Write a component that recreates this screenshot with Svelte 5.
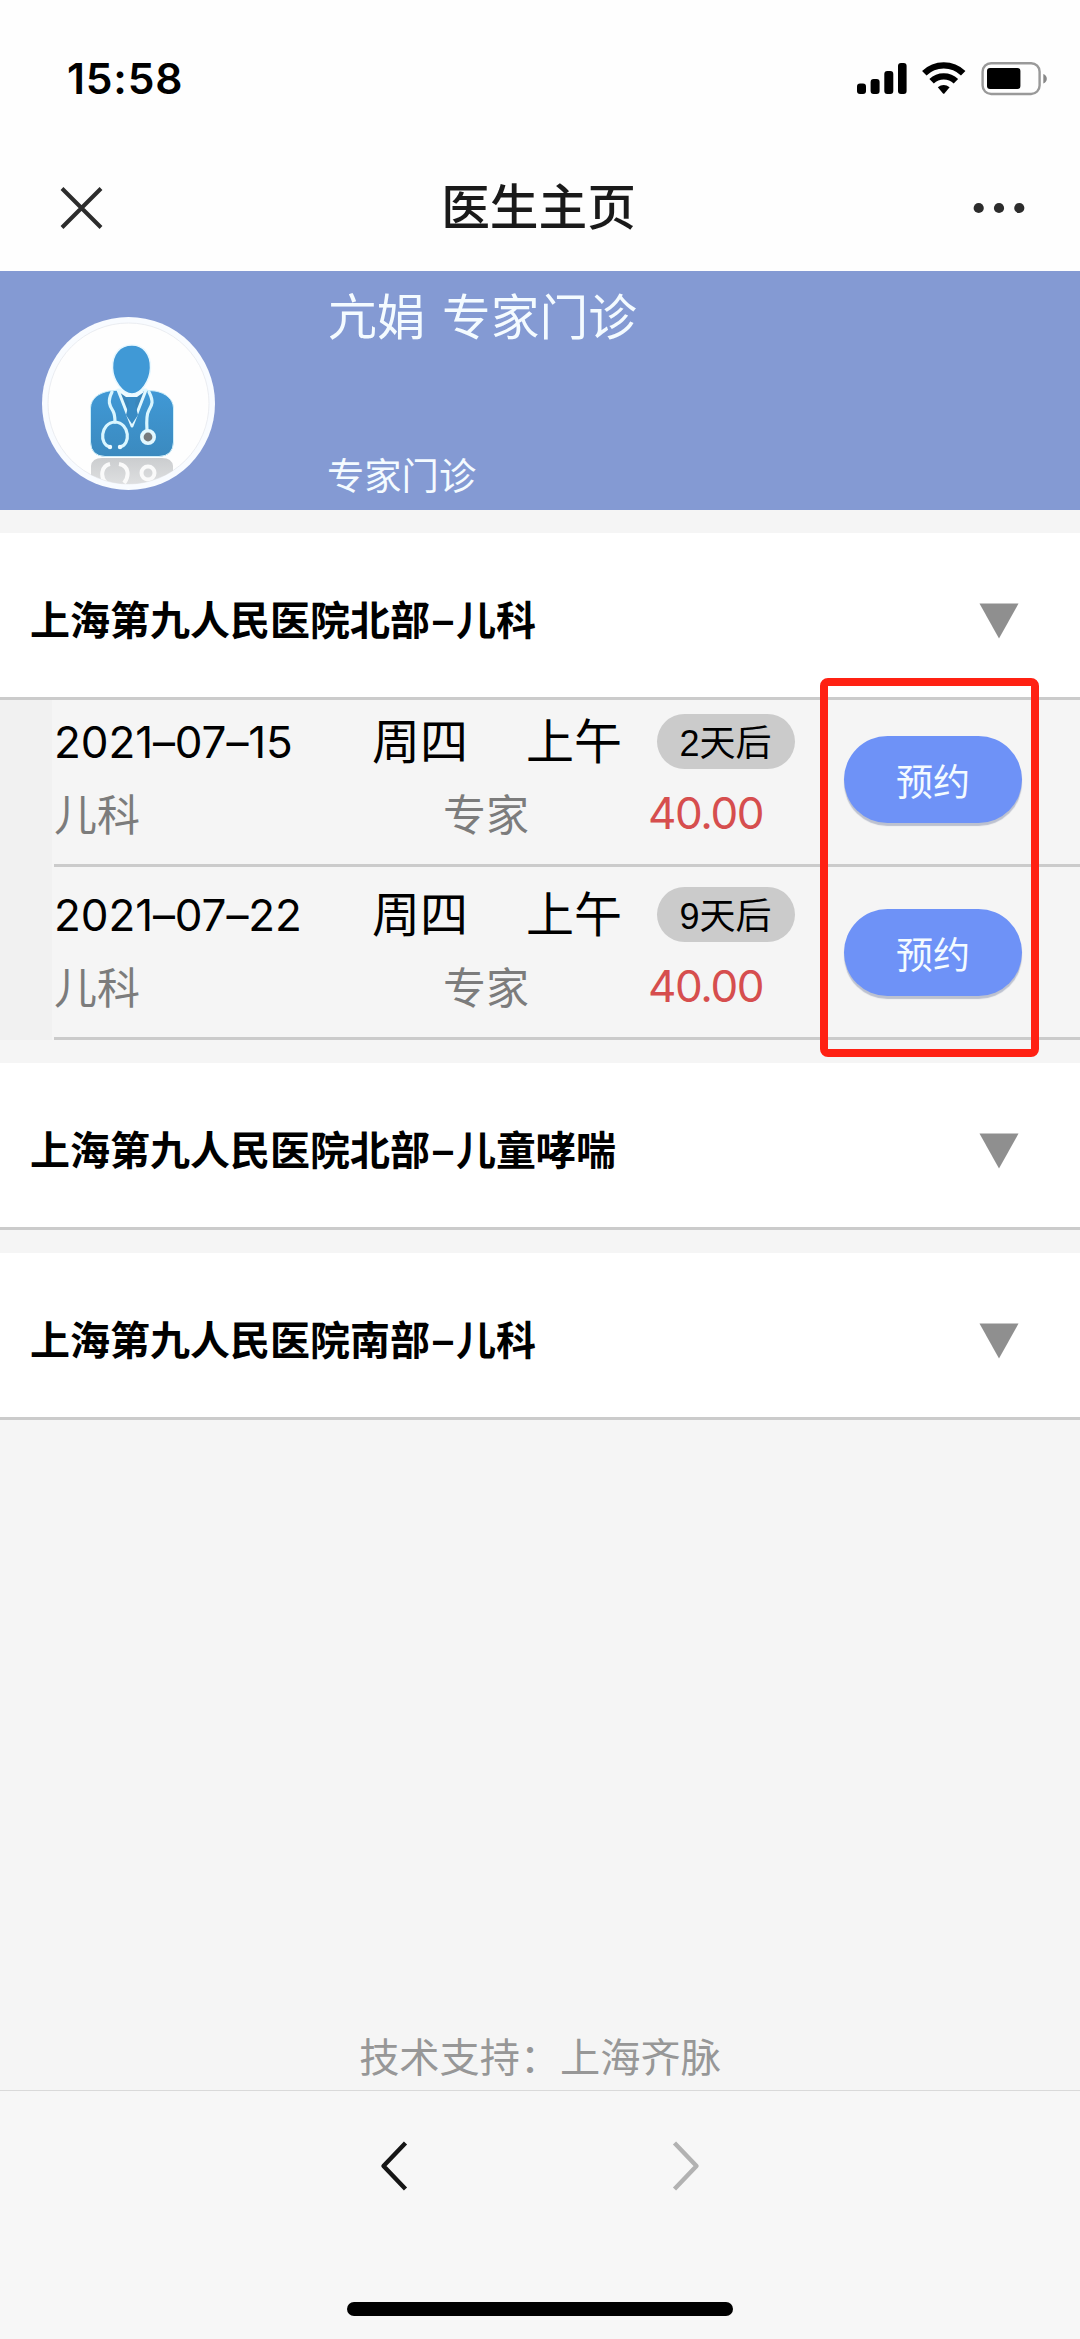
<script>
  const slots = [
    { date: '2021–07–15', day: '周四', period: '上午', wait: '2天后', dept: '儿科', level: '专家', price: '40.00' },
    { date: '2021–07–22', day: '周四', period: '上午', wait: '9天后', dept: '儿科', level: '专家', price: '40.00' }
  ];
  const groups = [
    { place: '上海第九人民医院北部', dept: '儿科', slots },
    { place: '上海第九人民医院北部', dept: '儿童哮喘', slots: [] },
    { place: '上海第九人民医院南部', dept: '儿科', slots: [] }
  ];
</script>

<div class="page">
  <div class="status">
    <span class="time">15:58</span>
    <svg class="indicators" width="192" height="36" viewBox="856 61 192 36">
      <rect x="857" y="83.5" width="9" height="10.5" rx="3" />
      <rect x="870.6" y="79" width="9" height="15" rx="3" />
      <rect x="884.3" y="71" width="9" height="23" rx="3" />
      <rect x="898" y="63" width="8.6" height="31" rx="3" />
      <g fill="none" stroke="#000" stroke-width="6.4">
        <path d="M924.3 73.2A28 28 0 0 1 963.2 73.2" />
        <path d="M931.6 81.3A17.5 17.5 0 0 1 955.9 81.3" />
      </g>
      <path d="M937.8 87.2Q943.7 82.6 949.6 87.2L944.6 93.3Q943.7 94.3 942.8 93.3Z" />
      <rect x="982.6" y="63.2" width="57" height="30.8" rx="8.5" fill="none" stroke="#999" stroke-width="2.4" />
      <rect x="987" y="68" width="33.4" height="21" rx="3" />
      <path d="M1043.3 74C1048 75.5 1048 82 1043.3 83.5Z" fill="#888" />
    </svg>
  </div>

  <header class="nav">
    <svg width="44" height="44" viewBox="0 0 44 44" fill="none" stroke="#2c2c2c" stroke-width="4">
      <path d="M2 2.5L41 41.5M41 2.5L2 41.5" />
    </svg>
    <h1>医生主页</h1>
    <svg width="52" height="12" viewBox="0 0 52 12" fill="#2c2c2c">
      <circle cx="5.7" cy="6" r="5.1" /><circle cx="26" cy="6" r="5.1" /><circle cx="46.3" cy="6" r="5.1" />
    </svg>
  </header>

  <section class="doctor">
    <svg class="avatar" width="173" height="173" viewBox="0 0 173 173">
      <defs>
        <linearGradient id="coat" x1="0" y1="0" x2="0" y2="1">
          <stop offset="0" stop-color="#4099d6" /><stop offset="1" stop-color="#3b8abf" />
        </linearGradient>
        <linearGradient id="fade" x1="0" y1="0" x2="0" y2="1">
          <stop offset="0" stop-color="#cbcdcf" /><stop offset="1" stop-color="#e2e3e4" />
        </linearGradient>
        <clipPath id="photo"><circle cx="86.5" cy="86.5" r="80.5" /></clipPath>
      </defs>
      <circle cx="86.5" cy="86.5" r="86.5" fill="#f8fbff" />
      <circle cx="86.5" cy="86.5" r="80.5" fill="#fefefe" stroke="#e6e9ee" stroke-width=".8" />
      <g clip-path="url(#photo)">
        <path d="M49 173V149Q50 141 60 141H120Q130 141 131 149V173Z" fill="url(#fade)" />
        <g fill="none" stroke="#fafafa" stroke-width="4">
          <path d="M68 147C59 149 58 160 64 166M77 147C88 149 87 160 82 166" />
          <circle cx="106" cy="156" r="6.5" />
        </g>
      </g>
      <path d="M48.500 91C49 81 57 76 67 74L78 73H101L113 74C124 76 131 82 131.500 91V125Q131 139 117 139.500H63Q49 139 48.500 125Z" fill="url(#coat)" stroke="#cdeefa" stroke-width="1" />
      <path d="M76 73L90 109L104 73Z" fill="#3a86bb" stroke="#e2f8ff" stroke-width="3" stroke-linejoin="round" />
      <path d="M77 75L84 80H95L102 75L96 71H82Z" fill="#eefaff" />
      <path d="M84 80H95L93 86L96 98L90 107L84 98L87 86Z" fill="#398bc4" />
      <path d="M90 28C78 28 70 37 70.500 51C71 64 81 77 90 77C99 77 108 64 108.500 51C109 37 101 28 90 28Z" fill="#4099d6" stroke="#e9f8ff" stroke-width="1.500" />
      <g fill="none" stroke="#d9f6ff" stroke-width="3.200" stroke-linecap="round" stroke-linejoin="round">
        <path d="M70 75C65 85 68 89 71 94Q73 98 73 105" />
        <path d="M107 75C112 85 110 88 107 93Q104 98 105 113" />
        <path d="M68 130C57 128 58 106 73 105C88 106 89 128 78 130" />
      </g>
      <circle cx="68" cy="130" r="2.200" fill="#eefaff" /><circle cx="78" cy="130" r="2.200" fill="#eefaff" />
      <circle cx="106" cy="120" r="6.200" fill="#777b7e" stroke="#e2f8ff" stroke-width="3.600" />
    </svg>
    <div class="info">
      <div class="name">亢娟 专家门诊</div>
      <div class="kind">专家门诊</div>
    </div>
  </section>

  <main>
    {#each groups as g}
      <section class="group">
        <div class="head">
          <h2>{g.place}<span class="dash">–</span>{g.dept}</h2>
          <svg width="40" height="36" viewBox="0 0 40 36"><path d="M.5 .5H39.500L20 35.500Z" fill="#8f8f8f" /></svg>
        </div>
        {#if g.slots.length}
          <div class="slots">
            {#each g.slots as s}
              <div class="slot">
                <div class="details">
                  <div class="line first">
                    <span class="date">{s.date}</span>
                    <span class="day">{s.day}</span>
                    <span class="period">{s.period}</span>
                    <span class="wait">{s.wait}</span>
                  </div>
                  <div class="line second">
                    <span class="dept">{s.dept}</span>
                    <span class="level">{s.level}</span>
                    <span class="price">{s.price}</span>
                  </div>
                </div>
                <button>预约</button>
              </div>
            {/each}
            <div class="frame"></div>
          </div>
        {/if}
      </section>
    {/each}
  </main>

  <p class="support">技术支持：上海齐脉</p>

  <footer>
    <div class="arrows">
      <svg width="28" height="52" viewBox="0 0 28 52" fill="none" stroke="#161616" stroke-width="4.400" stroke-linejoin="round"><path d="M25.500 3L3.500 26L25.500 49" /></svg>
      <svg width="28" height="52" viewBox="0 0 28 52" fill="none" stroke="#b2b2b2" stroke-width="4.400" stroke-linejoin="round"><path d="M2.500 3L24.500 26L2.500 49" /></svg>
    </div>
    <div class="home"></div>
  </footer>
</div>

<style>
  :global(body) { background: #f5f5f5; }
  .page {
    width: 1080px;
    height: 2339px;
    display: flex;
    flex-direction: column;
    overflow: hidden;
    background: #f5f5f5;
    color: #000;
    font-family: Inter, "Noto Sans CJK SC", sans-serif;
  }
  h1, h2, p { margin: 0; }
  svg { display: block; flex: none; }

  .status {
    height: 136px;
    box-sizing: border-box;
    padding: 61px 32px 0 67px;
    display: flex;
    justify-content: space-between;
    align-items: flex-start;
    background: #fefefe;
  }
  .time { font-size: 42.500px; line-height: 36px; font-weight: 600; letter-spacing: .8px; }

  .nav {
    height: 135px;
    box-sizing: border-box;
    padding: 8px 55px 0 60px;
    display: grid;
    grid-template-columns: 1fr auto 1fr;
    align-items: center;
    background: #fefefe;
  }
  .nav svg:last-child { justify-self: end; }
  h1 { font-size: 48.700px; line-height: 60px; font-weight: 500; color: #1a1a1a; margin: 0 4px 0 -4px; }

  .doctor {
    height: 239px;
    box-sizing: border-box;
    padding: 46px 0 0 42px;
    display: flex;
    background: #849ad3;
    color: #f4fbff;
  }
  .info { margin: -31px 0 0 113px; display: flex; flex-direction: column; gap: 102px; }
  .name { font-size: 48.700px; line-height: 64px; word-spacing: 3px; }
  .kind { font-size: 37.300px; line-height: 50px; margin-left: -1px; }

  .group { padding-top: 23px; }
  .head {
    height: 167px;
    box-sizing: border-box;
    border-bottom: 3px solid #cbcbcb;
    padding: 12px 61px 0 30px;
    display: flex;
    align-items: center;
    justify-content: space-between;
    background: #fff;
  }
  h2 { font-size: 40px; line-height: 56px; font-weight: 700; }
  .dash { display: inline-block; width: 26px; text-align: center; font-weight: 600; }

  .slots { position: relative; padding-left: 54px; background: linear-gradient(90deg, #f1f1f1 52px, #f5f5f5 52px); }
  .slot {
    height: 173px;
    box-sizing: border-box;
    border-bottom: 3px solid #cbcbcb;
    display: flex;
    justify-content: space-between;
    padding-right: 58px;
  }
  .slot:first-child { height: 167px; }
  .slot:nth-child(2) { padding-top: 6px; }
  .details { width: 750px; padding-top: 9px; }
  .line { display: grid; align-items: center; white-space: nowrap; }
  .first { height: 65px; grid-template-columns: 318px 155px 130px 138px; }
  .second { height: 75px; grid-template-columns: 389px 204px 1fr; font-size: 43px; color: #7c7c7c; }
  .date { font-size: 44px; letter-spacing: -.1px; }
  .day, .period { font-size: 48px; line-height: 60px; }
  .period { margin-left: -1px; }
  .wait {
    height: 55px;
    line-height: 60px;
    border-radius: 28px;
    background: #cbcbcb;
    text-align: center;
    font-family: "Liberation Sans", "Noto Sans CJK SC", sans-serif;
    font-size: 36px;
    text-indent: -1px;
  }
  .second .price { color: #d64e4e; font-size: 44px; letter-spacing: -1.400px; padding: 3px 0 0 1px; }
  button {
    width: 178px;
    height: 87px;
    margin-top: 36px;
    padding: 0;
    border: 0;
    border-radius: 44px;
    background: #6e92f7;
    box-shadow: 0 3px 1px #bcc1cf;
    color: #f4fbff;
    font: 400 37px "Noto Sans CJK SC", sans-serif;
  }
  .frame {
    position: absolute;
    left: 820px;
    top: -22px;
    width: 219px;
    height: 379px;
    box-sizing: border-box;
    border: 8px solid #ff2113;
    border-radius: 8px;
  }

  .support { margin-top: auto; height: 60px; line-height: 56px; text-align: center; font-size: 40.200px; color: #979797; }
  footer {
    height: 249px;
    box-sizing: border-box;
    border-top: 1px solid #dadada;
    background: #f7f7f7;
    display: flex;
    flex-direction: column;
    align-items: center;
    justify-content: space-between;
    padding: 49px 0 23px;
  }
  .arrows { display: flex; justify-content: space-between; width: 320px; }
  .home { width: 386px; height: 14px; border-radius: 7px; background: #000; }
</style>
